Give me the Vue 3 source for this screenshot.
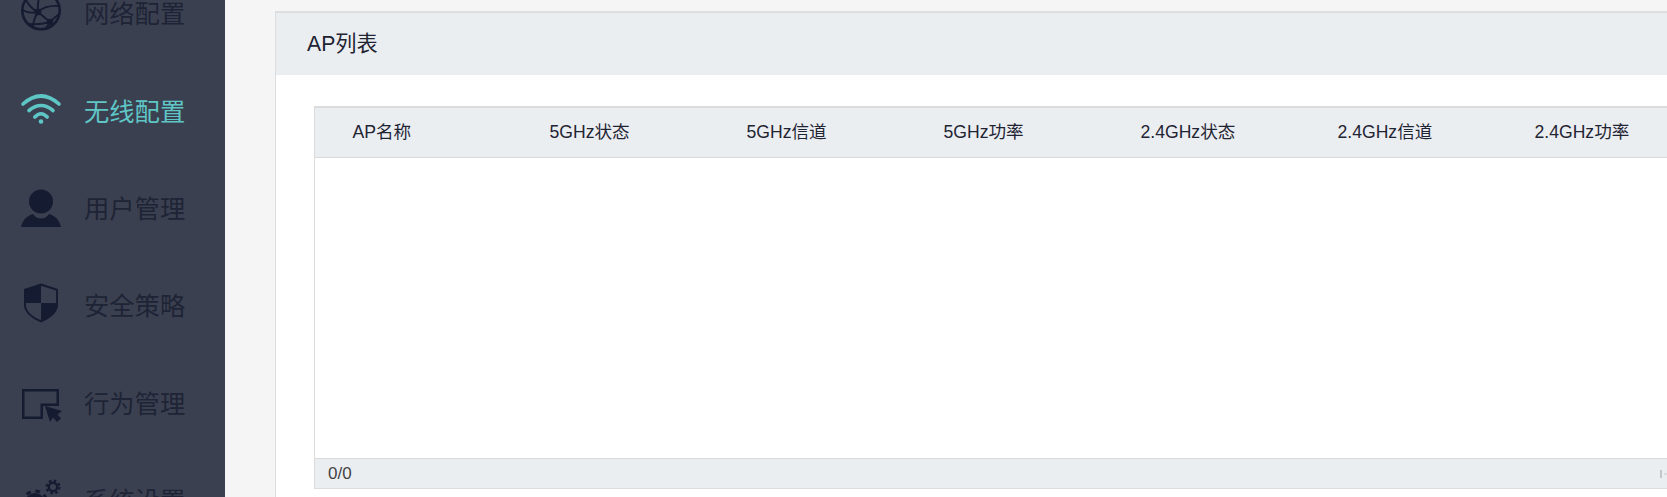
<script setup>
const nav = [
  { label: '网络配置', icon: 'globe' },
  { label: '无线配置', icon: 'wifi', active: true },
  { label: '用户管理', icon: 'user' },
  { label: '安全策略', icon: 'shield' },
  { label: '行为管理', icon: 'behavior' },
  { label: '系统设置', icon: 'gear' },
]
const cols = ['AP名称', '5GHz状态', '5GHz信道', '5GHz功率', '2.4GHz状态', '2.4GHz信道', '2.4GHz功率']
</script>

<template>
  <div class="page">
    <aside class="side">
      <ul class="nav">
        <li v-for="n in nav" :key="n.label" class="item" :class="{ on: n.active }">
          <svg class="ico" viewBox="0 0 40 40">
            <g v-if="n.icon === 'globe'" fill="none" stroke="currentColor" stroke-width="1.9">
              <circle cx="20" cy="16.500" r="18.700" stroke-width="2.600" />
              <path d="M5 6Q10 15 17 18M17 18Q24 11 38 12M17 18L29 28M29 28Q33 24 38 20M29 28Q26 33 24 35M29 28Q18 31 8 30M17 18Q12 26 12 33M1.500 16Q8 20 17 18M20 -2Q16 8 17 18" />
              <circle cx="17" cy="18" r="2.400" fill="currentColor" />
              <circle cx="29" cy="28" r="2.200" fill="currentColor" />
            </g>
            <g v-else-if="n.icon === 'wifi'" fill="none" stroke="currentColor" stroke-linecap="round" stroke-width="3.600">
              <path d="M2 12Q20 -4 38 12" />
              <path d="M8 18.500Q20 8.500 32 18.500" />
              <path d="M13.800 25Q20 18.500 26.200 25" />
              <circle cx="20" cy="29.500" r="2.300" fill="currentColor" stroke="none" />
            </g>
            <g v-else-if="n.icon === 'user'" fill="currentColor">
              <circle cx="20" cy="12.500" r="12" />
              <path d="M0 38C2 30 6 27 12 25C14 28 17 29.500 20 29.500S26 28 28 25C34 27 38 30 40 38z" />
            </g>
            <g v-else-if="n.icon === 'shield'" fill="currentColor">
              <path fill-rule="evenodd" d="M20 -2.500 37 3V19C37 27 28 33 20 36.500C12 33 3 27 3 19V3zM20 -0.200 5 4.600V19C5 26 13 31.500 20 34.200C27 31.500 35 26 35 19V4.600z" />
              <path d="M20 -1 4.500 4V17H20zM20 17V35C27 32 35.500 26 35.500 19V17z" />
            </g>
            <g v-else-if="n.icon === 'behavior'" fill="currentColor">
              <path fill-rule="evenodd" d="M1 5H38V22H22V35H1zM3.500 7.500V32.500H19.500V19.500H35.500V7.500z" />
              <path d="M24 22 41 27 36.500 30.500 40 34.500 36 38 32 33.500 29 38z" />
            </g>
            <g v-else fill="none" stroke="currentColor">
              <circle cx="32" cy="6" r="4.200" stroke-width="2.400" />
              <circle cx="32" cy="6" r="6.300" stroke-width="2.400" stroke-dasharray="2.500 2.450" />
              <circle cx="14" cy="22" r="7" stroke-width="6" />
              <circle cx="14" cy="22" r="12" stroke-width="3" stroke-dasharray="4.700 4.720" />
            </g>
          </svg>
          <span class="label">{{ n.label }}</span>
        </li>
      </ul>
    </aside>
    <main class="main">
      <section class="card">
        <h2 class="title">AP列表</h2>
        <div class="body">
          <div class="table">
            <div class="thead">
              <div v-for="c in cols" :key="c" class="th">{{ c }}</div>
            </div>
            <div class="tbody"></div>
            <div class="tfoot">
              <span class="count">0/0</span>
              <svg class="pager" viewBox="0 0 7 8">
                <rect x="0" y="0" width="2" height="8" fill="#c4c7ca" />
                <rect x="4" y="3.500" width="3" height="1" fill="#c4c7ca" />
              </svg>
            </div>
          </div>
        </div>
      </section>
    </main>
  </div>
</template>

<style>
html, body { margin: 0; overflow: hidden; background: #f5f5f5; }
</style>

<style scoped>
.page {
  display: flex;
  width: 1667px;
  height: 497px;
  overflow: hidden;
  font-family: "Liberation Sans", "Noto Sans CJK SC", sans-serif;
  color: #1f2433;
}
.side {
  flex: 0 0 225px;
  background: #3b4050;
  overflow: hidden;
}
.nav {
  list-style: none;
  margin: -34.400px 0 0;
  padding: 0;
}
.item {
  display: flex;
  align-items: center;
  height: 97.400px;
  padding-left: 21px;
  gap: 23px;
  color: #151b31;
}
.item.on { color: #5fc6c6; }
.ico { width: 40px; height: 40px; flex: none; overflow: visible; }
.label { font-size: 25.300px; line-height: 32px; white-space: nowrap; color: #1e2436; }
.on .label { color: #5fc6c6; }
.main {
  flex: 1;
  min-width: 0;
  padding: 11px 0 0 50px;
  background: #f5f5f5;
}
.card {
  width: 1500px;
  height: 520px;
  border: 0 solid #dedede;
  border-width: 2px 0 0 1px;
  background: #fff;
}
.title {
  margin: 0;
  height: 62px;
  line-height: 62px;
  padding-left: 31px;
  background: #ebeef1;
  font-size: 21.200px;
  font-weight: 400;
  color: #1f2433;
}
.body { padding: 31px 0 0 38px; }
.table {
  border: 0 solid #dcdcdc;
  border-width: 2px 0 1px 1px;
  width: 1500px;
}
.thead {
  display: flex;
  height: 49px;
  background: #ebeef1;
  border-bottom: 1px solid #d8dbde;
}
.th {
  flex: 0 0 197px;
  padding-left: 37.500px;
  box-sizing: border-box;
  line-height: 49px;
  font-size: 17.600px;
  white-space: nowrap;
}
.tbody { height: 300px; background: #fff; }
.tfoot {
  display: flex;
  justify-content: space-between;
  align-items: center;
  box-sizing: border-box;
  width: 1352px;
  height: 30px;
  padding-left: 13px;
  background: #ebeef1;
  border-top: 1px solid #d8dbde;
  font-size: 17px;
  color: #444;
}
.count { padding-top: 1px; }
.pager { width: 7px; height: 8px; flex: none; }
</style>
